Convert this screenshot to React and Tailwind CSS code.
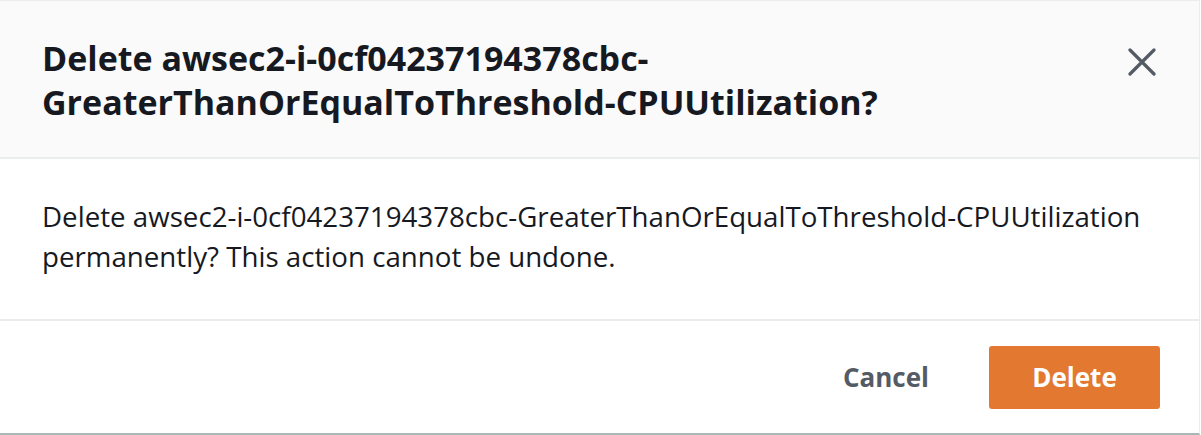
export default function App() {
  const name = 'awsec2-i-0cf04237194378cbc-GreaterThanOrEqualToThreshold-CPUUtilization';

  return (
    <div className="w-[1201px] h-[435px] bg-white" style={{ fontFamily: '"Open Sans", Roboto, sans-serif' }}>
      <div className="flex h-full w-[1200px] flex-col border-t border-r border-[#eaeded] border-b-2 border-b-[#aab7b8]">
        {/* Header */}
        <div className="flex h-[158px] items-start justify-between border-b-2 border-[#eaeded] bg-[#fafafa] pl-[42px] pr-[43px] pt-[35px]">
          <h1 className="text-[34px] font-bold leading-[44px] text-[#16191f]">
            Delete awsec2-i-0cf04237194378cbc-
            <br />
            GreaterThanOrEqualToThreshold-CPUUtilization?
          </h1>
          <button className="mt-[12px] flex h-[28px] w-[28px] items-center justify-center text-[#545b64]">
            <svg width="28" height="28" viewBox="0 0 28 28" fill="none" stroke="currentColor" strokeWidth="3.2" strokeLinecap="round">
              <path d="M2 2 L26 26 M26 2 L2 26" />
            </svg>
          </button>
        </div>

        {/* Body */}
        <div className="flex h-[162px] items-center border-b-2 border-[#eaeded] px-[42px] pb-[7px]">
          <p className="text-[27.7px] leading-[40px] text-[#16191f]">
            Delete {name}
            <br />
            permanently? This action cannot be undone.
          </p>
        </div>

        {/* Footer */}
        <div className="flex flex-1 items-center justify-end gap-[60px] pr-[39px]">
          <button className="text-[26px] font-bold text-[#545b64]">Cancel</button>
          <button className="h-[63px] w-[171px] rounded-[3px] bg-[#e37830] text-[26px] font-bold text-white">
            Delete
          </button>
        </div>
      </div>
    </div>
  );
}
